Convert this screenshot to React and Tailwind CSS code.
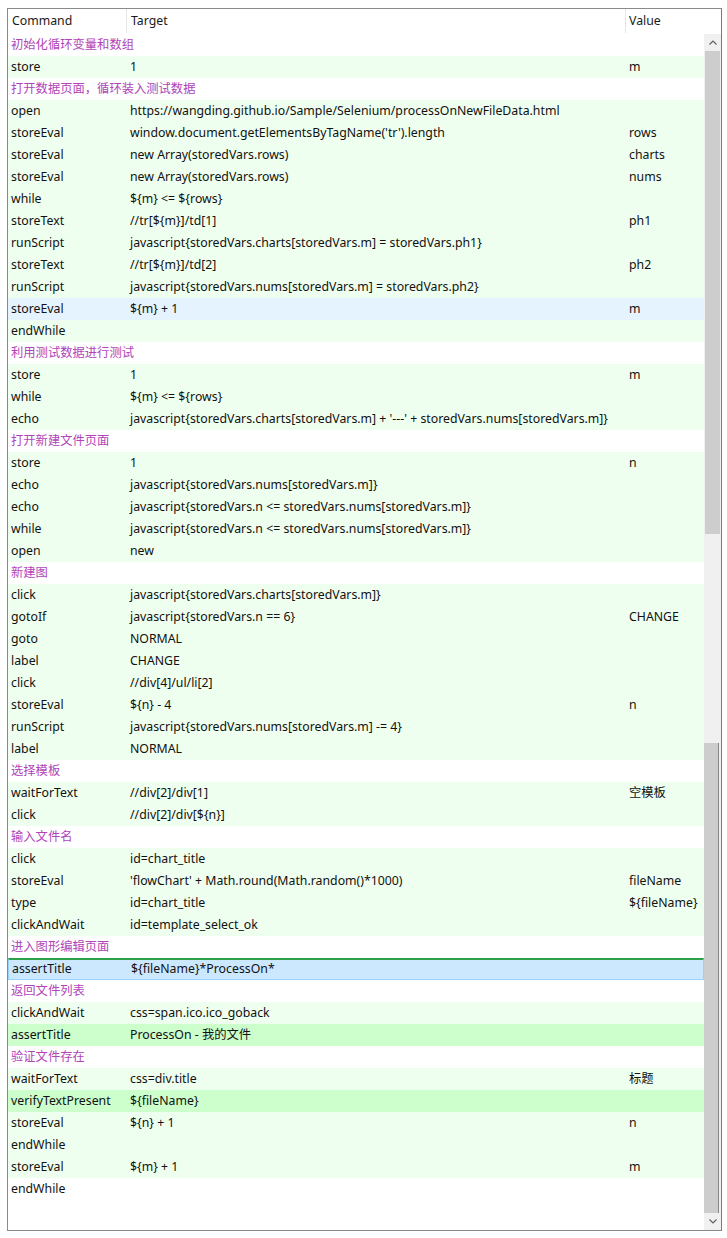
import React from 'react';

// c = comment row, t = row tone
const rows = [
  { c: '初始化循环变量和数组' },
  { cmd: 'store', target: '1', value: 'm' },
  { c: '打开数据页面，循环装入测试数据' },
  { cmd: 'open', target: 'https://wangding.github.io/Sample/Selenium/processOnNewFileData.html' },
  { cmd: 'storeEval', target: "window.document.getElementsByTagName('tr').length", value: 'rows' },
  { cmd: 'storeEval', target: 'new Array(storedVars.rows)', value: 'charts' },
  { cmd: 'storeEval', target: 'new Array(storedVars.rows)', value: 'nums' },
  { cmd: 'while', target: '${m} <= ${rows}' },
  { cmd: 'storeText', target: '//tr[${m}]/td[1]', value: 'ph1' },
  { cmd: 'runScript', target: 'javascript{storedVars.charts[storedVars.m] = storedVars.ph1}' },
  { cmd: 'storeText', target: '//tr[${m}]/td[2]', value: 'ph2' },
  { cmd: 'runScript', target: 'javascript{storedVars.nums[storedVars.m] = storedVars.ph2}' },
  { cmd: 'storeEval', target: '${m} + 1', value: 'm', t: 'hover' },
  { cmd: 'endWhile' },
  { c: '利用测试数据进行测试' },
  { cmd: 'store', target: '1', value: 'm' },
  { cmd: 'while', target: '${m} <= ${rows}' },
  { cmd: 'echo', target: "javascript{storedVars.charts[storedVars.m] + '---' + storedVars.nums[storedVars.m]}" },
  { c: '打开新建文件页面' },
  { cmd: 'store', target: '1', value: 'n' },
  { cmd: 'echo', target: 'javascript{storedVars.nums[storedVars.m]}' },
  { cmd: 'echo', target: 'javascript{storedVars.n <= storedVars.nums[storedVars.m]}' },
  { cmd: 'while', target: 'javascript{storedVars.n <= storedVars.nums[storedVars.m]}' },
  { cmd: 'open', target: 'new' },
  { c: '新建图' },
  { cmd: 'click', target: 'javascript{storedVars.charts[storedVars.m]}' },
  { cmd: 'gotoIf', target: 'javascript{storedVars.n == 6}', value: 'CHANGE' },
  { cmd: 'goto', target: 'NORMAL' },
  { cmd: 'label', target: 'CHANGE' },
  { cmd: 'click', target: '//div[4]/ul/li[2]' },
  { cmd: 'storeEval', target: '${n} - 4', value: 'n' },
  { cmd: 'runScript', target: 'javascript{storedVars.nums[storedVars.m] -= 4}' },
  { cmd: 'label', target: 'NORMAL' },
  { c: '选择模板' },
  { cmd: 'waitForText', target: '//div[2]/div[1]', value: '空模板' },
  { cmd: 'click', target: '//div[2]/div[${n}]' },
  { c: '输入文件名' },
  { cmd: 'click', target: 'id=chart_title' },
  { cmd: 'storeEval', target: "'flowChart' + Math.round(Math.random()*1000)", value: 'fileName' },
  { cmd: 'type', target: 'id=chart_title', value: '${fileName}' },
  { cmd: 'clickAndWait', target: 'id=template_select_ok' },
  { c: '进入图形编辑页面' },
  { cmd: 'assertTitle', target: '${fileName}*ProcessOn*', t: 'sel' },
  { c: '返回文件列表' },
  { cmd: 'clickAndWait', target: 'css=span.ico.ico_goback' },
  { cmd: 'assertTitle', target: 'ProcessOn - 我的文件', t: 'pass' },
  { c: '验证文件存在' },
  { cmd: 'waitForText', target: 'css=div.title', value: '标题' },
  { cmd: 'verifyTextPresent', target: '${fileName}', t: 'pass' },
  { cmd: 'storeEval', target: '${n} + 1', value: 'n' },
  { cmd: 'endWhile' },
  { cmd: 'storeEval', target: '${m} + 1', value: 'm' },
  { cmd: 'endWhile', t: 'plain' },
];

const font = { fontFamily: '"Noto Sans", "Noto Sans CJK SC", sans-serif' };

function Row({ r }) {
  if (r.c) {
    return (
      <div className="h-[22px] flex items-center pl-[3px] text-[#b044b8] bg-white">{r.c}</div>
    );
  }
  let tone = 'bg-[#efffef]';
  if (r.t === 'hover') tone = 'bg-[#e5f3ff]';
  if (r.t === 'pass') tone = 'bg-[#ccffcc]';
  if (r.t === 'plain') tone = 'bg-white';
  if (r.t === 'sel') tone = 'bg-[#cce8ff] border border-[#99d1ff] border-t-2 border-t-[#2ea04a]';
  return (
    <div className={`h-[22px] flex items-center text-[#111] ${tone}`}>
      <div className="w-[119px] shrink-0 pl-[3px] whitespace-nowrap">{r.cmd}</div>
      <div className="w-[499px] shrink-0 pl-[3px] whitespace-nowrap">{r.target}</div>
      <div className="flex-1 pl-[3px] whitespace-nowrap">{r.value}</div>
    </div>
  );
}

export default function App() {
  return (
    <div className="w-[727px] h-[1238px] bg-white pt-[8px] pl-[7px]" style={font}>
      <div className="w-[715px] h-[1223px] border border-[#8a8a8a] border-r-[#7a7a7a] flex flex-col text-[12.3px]">
        <div className="h-[25px] flex items-center bg-white text-[#1a1a1a] border-b border-white">
          <div className="w-[119px] shrink-0 pl-[4px] h-full flex items-center border-r border-[#e5e5e5]">Command</div>
          <div className="w-[499px] shrink-0 pl-[4px] h-full flex items-center border-r border-[#e5e5e5]">Target</div>
          <div className="flex-1 pl-[3px] h-full flex items-center">Value</div>
        </div>
        <div className="flex flex-1 min-h-0">
          <div className="flex-1 flex flex-col overflow-hidden">
            {rows.map((r, i) => (
              <Row key={i} r={r} />
            ))}
          </div>
          <div className="w-[17px] shrink-0 flex flex-col bg-[#f0f0f0]">
            <div className="h-[17px] flex items-center justify-center text-[#606060]">
              <svg width="8" height="5" viewBox="0 0 8 5"><path d="M0.5 4.5 L4 1 L7.5 4.5" fill="none" stroke="#606060" strokeWidth="1.2" /></svg>
            </div>
            <div className="h-[483px] mx-[1px] bg-[#cdcdcd]"></div>
            <div className="h-[209px]"></div>
            <div className="flex-1 mr-[2px] bg-[#cdcdcd] border-r border-[#888]"></div>
            <div className="h-[17px] flex items-center justify-center">
              <svg width="8" height="5" viewBox="0 0 8 5"><path d="M0.5 0.5 L4 4 L7.5 0.5" fill="none" stroke="#606060" strokeWidth="1.2" /></svg>
            </div>
          </div>
        </div>
      </div>
    </div>
  );
}
